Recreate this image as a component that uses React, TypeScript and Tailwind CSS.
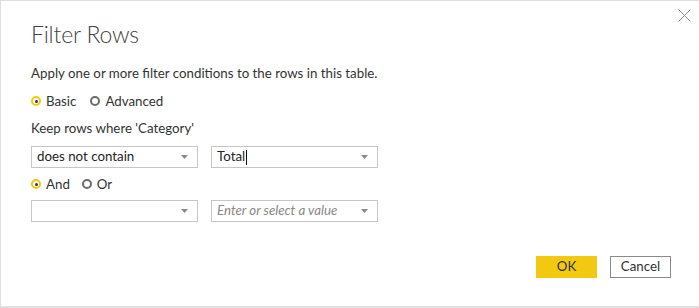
import React from "react";

function Radio({ label, checked }: { label: string; checked?: boolean }) {
  return (
    <label className="flex items-center gap-[5px]">
      {checked ? (
        <span className="flex h-[10px] w-[10px] items-center justify-center rounded-full border-2 border-[#f2c811]">
          <span className="h-[3px] w-[3px] rounded-full bg-[#333]" />
        </span>
      ) : (
        <span className="h-[10px] w-[10px] rounded-full border-2 border-[#6b6b6b]" />
      )}
      <span>{label}</span>
    </label>
  );
}

function Select({
  value,
  placeholder,
  caret,
}: {
  value?: string;
  placeholder?: string;
  caret?: boolean;
}) {
  return (
    <div className="flex h-[22px] w-[167px] items-center justify-between border border-[#c6c6c6] bg-white pl-[5px] pr-[9px]">
      <span className="flex items-center">
        {value ? (
          <span className="text-[#252423]">{value}</span>
        ) : (
          <span className="italic text-[#8a8886]">{placeholder}</span>
        )}
        {caret && <span className="ml-px h-[15px] w-px bg-[#111]" />}
      </span>
      <svg width="7" height="4" viewBox="0 0 7 4">
        <path d="M0 0h7L3.5 4z" fill="#8a8a8a" />
      </svg>
    </div>
  );
}

export default function App() {
  return (
    <div className="h-[308px] w-[699px] bg-[#dedede] pl-px pt-px font-['Segoe_UI','Lato',sans-serif] text-[13.3px] text-[#333]">
      <div className="relative h-[305px] w-[698px] bg-white pl-[30px]">
        <button className="absolute right-[6px] top-[6px] p-[2px]">
          <svg width="13" height="13" viewBox="0 0 13 13">
            <path d="M0.5 0.5l12 12M12.5 0.5l-12 12" stroke="#8a8a8a" strokeWidth="1" />
          </svg>
        </button>
        <h1 className="pt-[17px] text-[23px] font-light leading-[32px] tracking-[-0.2px] text-[#444]">Filter Rows</h1>
        <p className="mt-[13px] leading-[20px]">Apply one or more filter conditions to the rows in this table.</p>
        <div className="mt-[8px] flex gap-[14px] leading-[20px]">
          <Radio label="Basic" checked />
          <Radio label="Advanced" />
        </div>
        <p className="mt-[7px] leading-[20px]">Keep rows where 'Category'</p>
        <div className="mt-[8px] flex gap-[13px]">
          <Select value="does not contain" />
          <Select value="Total" caret />
        </div>
        <div className="mt-[6px] flex gap-[12px] leading-[20px]">
          <Radio label="And" checked />
          <Radio label="Or" />
        </div>
        <div className="mt-[6px] flex gap-[13px]">
          <Select />
          <Select placeholder="Enter or select a value" />
        </div>
        <div className="absolute bottom-[28px] right-[28px] flex gap-[13px]">
          <button className="h-[22px] w-[61px] bg-[#f2c811] text-[#333]">OK</button>
          <button className="h-[22px] w-[61px] border border-[#8a8a8a] bg-white text-[#333]">Cancel</button>
        </div>
      </div>
    </div>
  );
}
